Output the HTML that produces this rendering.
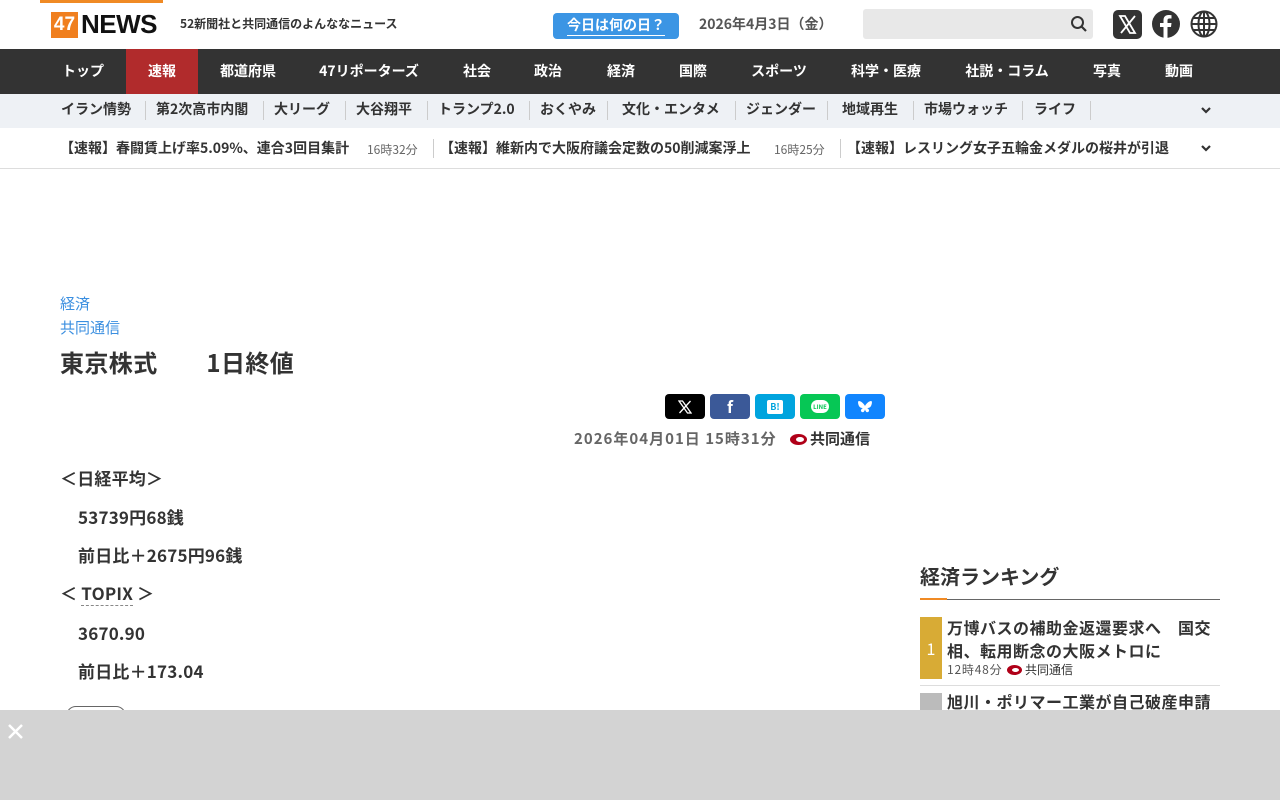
<!DOCTYPE html>
<html><head><meta charset="utf-8"><style>
*{margin:0;padding:0;box-sizing:border-box}
body{width:1280px;height:800px;overflow:hidden;position:relative;background:#fff;font-family:"Noto Sans CJK JP","Liberation Sans",sans-serif;color:#333;line-height:1.3}
.a{position:absolute;white-space:nowrap}
.nav{position:absolute;top:49px;left:0;width:1280px;height:45px;background:#333}
.nav span{position:absolute;top:0;height:45px;line-height:45px;color:#fff;font-size:14px;font-weight:bold;transform:translateX(-50%)}
.sub{position:absolute;top:94px;left:0;width:1280px;height:34px;background:#eef1f5}
.sub span{position:absolute;top:0;line-height:31px;font-size:14px;font-weight:bold;color:#333}
.sep{position:absolute;top:7px;width:1px;height:19px;background:#ccc}
.tick{position:absolute;top:128px;left:0;width:1280px;height:41px;border-bottom:1px solid #ddd}
.tick span{position:absolute;top:0;line-height:41px;font-size:14px;font-weight:bold;color:#333}
.tick small{position:absolute;top:0;line-height:43px;font-size:12px;color:#666}
.body p{position:absolute;left:78px;font-size:17px;font-weight:bold;color:#333;line-height:24px;letter-spacing:0.2px}
.sh{position:absolute;top:394px;width:40px;height:25px;border-radius:4px;color:#fff;text-align:center;line-height:25px;font-weight:bold;font-size:14px}
</style></head><body>
<div class="a" style="left:40px;top:0;width:123px;height:3px;background:#f08a24"></div>
<div class="a" style="left:51px;top:12px;width:27px;height:26px;background:#f07f1e;color:#fff;font-weight:bold;font-size:19px;line-height:26px;text-align:center;font-family:'Liberation Sans',sans-serif">47</div>
<div class="a" style="left:81px;top:8px;font-weight:900;font-size:26px;line-height:32px;color:#111;letter-spacing:-0.5px;font-family:'Liberation Sans',sans-serif">NEWS</div>
<div class="a" style="left:180px;top:16px;font-size:12px;font-weight:bold;color:#333">52新聞社と共同通信のよんななニュース</div>
<div class="a" style="left:553px;top:13px;width:126px;height:26px;background:#3b95e4;border-radius:4px;color:#fff;font-weight:bold;font-size:14px;text-align:center;line-height:25px"><span style="border-bottom:1px solid #fff">今日は何の日？</span></div>
<div class="a" style="left:699px;top:15px;font-size:14px;font-weight:bold;color:#555">2026年4月3日（金）</div>
<div class="a" style="left:863px;top:9px;width:230px;height:30px;background:#e8e8e8;border-radius:3px"></div>
<svg class="a" style="left:1070px;top:15px" width="18" height="18" viewBox="0 0 18 18"><circle cx="7.5" cy="7.5" r="5.5" fill="none" stroke="#333" stroke-width="2"/><path d="M11.5 11.5L16 16" stroke="#333" stroke-width="2.2"/></svg>
<svg class="a" style="left:1113px;top:10px" width="29" height="29" viewBox="0 0 29 29"><rect width="29" height="29" rx="5" fill="#333"/><path d="M7 6h5l10 17h-5zM22 6L8 23" stroke="#fff" stroke-width="1.8" fill="none"/></svg>
<svg class="a" style="left:1152px;top:10px" width="28" height="28" viewBox="0 0 28 28"><circle cx="14" cy="14" r="14" fill="#333"/><path d="M15.5 28V17h3.5l.5-4h-4v-2.5c0-1.2.4-2 2-2h2V5.2c-.4 0-1.6-.2-3-.2-3 0-5 1.8-5 5.2V13H8v4h3.5v11z" fill="#fff"/></svg>
<svg class="a" style="left:1190px;top:10px" width="28" height="28" viewBox="0 0 28 28" fill="none" stroke="#333" stroke-width="2"><circle cx="14" cy="14" r="12.5"/><ellipse cx="14" cy="14" rx="5.5" ry="12.5"/><path d="M14 1.5v25M1.5 14h25M3.5 8h21M3.5 20h21"/></svg>

<div class="nav">
<div class="a" style="left:126px;top:0;width:72px;height:45px;background:#b12b2c"></div>
<span style="left:83px">トップ</span><span style="left:162px">速報</span><span style="left:248px">都道府県</span><span style="left:369px">47リポーターズ</span><span style="left:477px">社会</span><span style="left:548px">政治</span><span style="left:621px">経済</span><span style="left:693px">国際</span><span style="left:779px">スポーツ</span><span style="left:886px">科学・医療</span><span style="left:1007px">社説・コラム</span><span style="left:1107px">写真</span><span style="left:1179px">動画</span>
</div>
<div class="sub">
<span style="left:61px">イラン情勢</span><div class="sep" style="left:145px"></div>
<span style="left:156px">第2次高市内閣</span><div class="sep" style="left:263px"></div>
<span style="left:274px">大リーグ</span><div class="sep" style="left:345px"></div>
<span style="left:356px">大谷翔平</span><div class="sep" style="left:427px"></div>
<span style="left:438px">トランプ2.0</span><div class="sep" style="left:529px"></div>
<span style="left:540px">おくやみ</span><div class="sep" style="left:607px"></div>
<span style="left:622px">文化・エンタメ</span><div class="sep" style="left:735px"></div>
<span style="left:746px">ジェンダー</span><div class="sep" style="left:827px"></div>
<span style="left:842px">地域再生</span><div class="sep" style="left:913px"></div>
<span style="left:924px">市場ウォッチ</span><div class="sep" style="left:1022px"></div>
<span style="left:1034px">ライフ</span><div class="sep" style="left:1090px"></div>
<svg class="a" style="left:1200px;top:12px" width="12" height="10" viewBox="0 0 12 10"><path d="M2 2l4 4 4-4" stroke="#333" stroke-width="2.2" fill="none"/></svg>
</div>
<div class="tick">
<span style="left:60px">【速報】春闘賃上げ率5.09%、連合3回目集計</span><small style="left:367px">16時32分</small><div class="sep" style="left:433px;top:11px"></div>
<span style="left:440px">【速報】維新内で大阪府議会定数の50削減案浮上</span><small style="left:774px">16時25分</small><div class="sep" style="left:840px;top:11px"></div>
<span style="left:847px">【速報】レスリング女子五輪金メダルの桜井が引退</span>
<div class="a" style="left:1188px;top:0;width:40px;height:40px;background:#fff"></div>
<svg class="a" style="left:1200px;top:16px" width="12" height="10" viewBox="0 0 12 10"><path d="M2 2l4 4 4-4" stroke="#333" stroke-width="2.2" fill="none"/></svg>
</div>

<div class="a" style="left:60px;top:294px;font-size:15px;color:#3b8fe0">経済</div>
<div class="a" style="left:60px;top:318px;font-size:15px;color:#3b8fe0">共同通信</div>
<div class="a" style="left:60px;top:346px;font-size:24px;font-weight:bold;color:#333;letter-spacing:0.4px">東京株式　　1日終値</div>
<div class="sh" style="left:665px;background:#000"><svg width="14" height="14" viewBox="0 0 14 14" style="margin-top:6px"><path d="M1 1h3.5l8.5 12h-3.5zM12.5 1L1.5 13" stroke="#fff" stroke-width="1.3" fill="none"/></svg></div>
<div class="sh" style="left:710px;background:#3b5998;font-size:16px">f</div>
<div class="sh" style="left:755px;background:#00a4de"><div style="width:16px;height:14px;background:#fff;color:#00a4de;font-size:9px;line-height:14px;margin:6px auto 0;border-radius:2px">B!</div></div>
<div class="sh" style="left:800px;background:#06c755"><div style="width:18px;height:13px;background:#fff;color:#06c755;font-size:6px;line-height:13px;margin:6px auto 0;border-radius:7px">LINE</div></div>
<div class="sh" style="left:845px;background:#1185fe"><svg width="16" height="14" viewBox="0 0 16 14" style="margin-top:6px"><path d="M8 6C6.5 3 3.5 1 2 1s-1 3 0 5c1 2 3 2 4 2-2 1-3 3-1 4 2 1 3-2 3-3 0 1 1 4 3 3 2-1 1-3-1-4 1 0 3 0 4-2s1.5-5 0-5S9.5 3 8 6z" fill="#fff"/></svg></div>
<div class="a" style="left:574px;top:429px;font-size:15px;font-weight:bold;color:#666;letter-spacing:1px">2026年04月01日 15時31分</div>
<div class="a" style="left:790px;top:434px;width:17px;height:11px;border-radius:50%;background:#b00018"><div style="position:absolute;left:6px;top:3px;width:8px;height:5px;border-radius:50%;background:#fff"></div></div>
<div class="a" style="left:810px;top:429px;font-size:15px;font-weight:bold;color:#333">共同通信</div>

<div class="body">
<p style="left:60px;top:466px">＜日経平均＞</p>
<p style="top:505px">53739円68銭</p>
<p style="top:543px">前日比＋2675円96銭</p>
<p style="left:60px;top:581px">＜ <span style="border-bottom:1px dashed #888">TOPIX</span> ＞</p>
<p style="top:621px">3670.90</p>
<p style="top:659px">前日比＋173.04</p>
</div>
<div class="a" style="left:66px;top:706px;width:60px;height:20px;border:1px solid #666;border-radius:10px"></div>

<div class="a" style="left:920px;top:563px;font-size:20px;font-weight:bold;color:#333">経済ランキング</div>
<div class="a" style="left:920px;top:599px;width:300px;height:1px;background:#666"></div>
<div class="a" style="left:920px;top:598px;width:27px;height:2px;background:#f08a24"></div>
<div class="a" style="left:920px;top:617px;width:22px;height:62px;background:#d8ab35;color:#fff;font-size:16px;text-align:center;line-height:62px">1</div>
<div class="a" style="left:947px;top:616px;font-size:16px;font-weight:bold;line-height:23px;color:#333;white-space:normal;width:275px;letter-spacing:0.5px">万博バスの補助金返還要求へ　国交相、転用断念の大阪メトロに</div>
<div class="a" style="left:947px;top:662px;font-size:12px;color:#555;letter-spacing:0.8px">12時48分</div>
<div class="a" style="left:1007px;top:665px;width:15px;height:10px;border-radius:50%;background:#b00018"><div style="position:absolute;left:5px;top:3px;width:7px;height:4px;border-radius:50%;background:#fff"></div></div>
<div class="a" style="left:1025px;top:662px;font-size:12px;color:#333">共同通信</div>
<div class="a" style="left:920px;top:685px;width:300px;height:1px;background:#ddd"></div>
<div class="a" style="left:920px;top:693px;width:22px;height:20px;background:#bbb"></div>
<div class="a" style="left:947px;top:691px;font-size:16px;font-weight:bold;color:#333;letter-spacing:0.5px">旭川・ポリマー工業が自己破産申請</div>

<div class="a" style="left:0;top:710px;width:1280px;height:90px;background:#d3d3d3"></div>
<svg class="a" style="left:7px;top:723px" width="17" height="17" viewBox="0 0 17 17"><path d="M2 2l13 13M15 2L2 15" stroke="#fff" stroke-width="2.5"/></svg>
</body></html>
